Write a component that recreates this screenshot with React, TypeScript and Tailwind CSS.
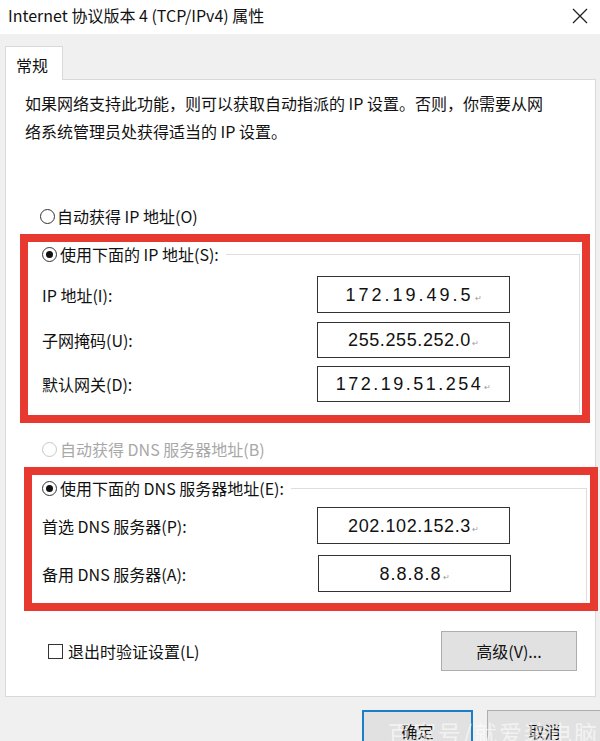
import React from "react";

const FONT = { fontFamily: '"Noto Sans CJK SC", "Noto Sans", sans-serif' } as const;

function Radio({ checked, disabled }: { checked?: boolean; disabled?: boolean }) {
  return (
    <span
      className={
        disabled
          ? "w-[15px] h-[15px] rounded-full border border-[#c8c8c8] bg-white flex items-center justify-center shrink-0"
          : "w-[15px] h-[15px] rounded-full border border-[#333333] bg-white flex items-center justify-center shrink-0"
      }
    >
      {checked && <span className="w-[7px] h-[7px] rounded-full bg-[#111111]" />}
    </span>
  );
}

function IpBox({ value, track, h }: { value: string; track: string; h: string }) {
  return (
    <div
      className={`w-[193px] ${h} border-[1.5px] border-[#333333] bg-white flex items-center justify-center`}
    >
      <span
        className={`text-[18px] leading-none text-[#111111] ${track}`}
        style={{ fontFamily: '"Liberation Sans", Arial, sans-serif' }}
      >
        {value}
      </span>
      <span className="text-[8px] leading-none text-[#9a9a9a] self-end mb-[10px] ml-[1px]">↵</span>
    </div>
  );
}

export default function App() {
  return (
    <div
      className="w-[600px] h-[741px] bg-[#f0f0f0] overflow-hidden relative text-[16px] text-[#111111]"
      style={FONT}
    >
      {/* title bar */}
      <div className="h-[34px] bg-white flex items-center justify-between pl-[8px] pr-[12px] pb-[4px]">
        <span className="leading-none">Internet 协议版本 4 (TCP/IPv4) 属性</span>
        <svg width="16" height="16" viewBox="0 0 16 16" className="mt-[2px]">
          <path d="M1 1 L15 15 M15 1 L1 15" stroke="#222" strokeWidth="1.3" fill="none" />
        </svg>
      </div>

      {/* tab */}
      <div className="mt-[12px] ml-[5px] w-[58px] h-[34px] bg-white border border-b-0 border-[#d9d9d9] relative z-10 -mb-[1px] flex items-start pt-[6px] pl-[10px]">
        常规
      </div>

      {/* panel */}
      <div className="ml-[5px] w-[591px] h-[618px] bg-white border border-[#d9d9d9]">
        <p className="mt-[9px] pl-[19px] leading-[28px]">
          如果网络支持此功能，则可以获取自动指派的 IP 设置。否则，你需要从网
          <br />
          络系统管理员处获得适当的 IP 设置。
        </p>

        <div className="mt-[61px] h-[20px] flex items-center pl-[34px] gap-[2px]">
          <Radio />
          <span>自动获得 IP 地址(O)</span>
        </div>

        {/* red box 1 */}
        <div className="mt-[8px] ml-[14px] w-[570px] h-[189px] border-8 border-[#e7392f]">
          <div className="pr-[2px] pb-[2px] h-full flex flex-col">
            <div className="mt-[2px] h-[20px] flex items-center pl-[14px] gap-[3px]">
              <Radio checked />
              <span>使用下面的 IP 地址(S):</span>
              <div className="flex-1 self-end h-[10px] border-t border-r border-[#dedede] ml-[4px]" />
            </div>
            <div className="flex-1 border-r border-[#dedede] pt-[12px] flex flex-col">
              <div className="flex items-center h-[37px]">
                <span className="w-[289px] pl-[14px]">IP 地址(I):</span>
                <IpBox value="172.19.49.5" track="tracking-[3px]" h="h-[37px]" />
              </div>
              <div className="flex items-center h-[36px] mt-[9px]">
                <span className="w-[289px] pl-[14px]">子网掩码(U):</span>
                <IpBox value="255.255.252.0" track="tracking-[0.6px]" h="h-[36px]" />
              </div>
              <div className="flex items-center h-[36px] mt-[8px]">
                <span className="w-[289px] pl-[14px]">默认网关(D):</span>
                <IpBox value="172.19.51.254" track="tracking-[2.5px]" h="h-[36px]" />
              </div>
            </div>
          </div>
        </div>

        <div className="mt-[16px] h-[20px] flex items-center pl-[36px] gap-[3px] text-[#a8a8a8]">
          <Radio disabled />
          <span>自动获得 DNS 服务器地址(B)</span>
        </div>

        {/* red box 2 */}
        <div className="mt-[8px] ml-[18px] w-[574px] h-[144px] border-8 border-[#e7392f]">
          <div className="pr-[3px] pb-[2px] h-full flex flex-col">
            <div className="mt-[3px] h-[20px] flex items-center pl-[10px] gap-[3px]">
              <Radio checked />
              <span>使用下面的 DNS 服务器地址(E):</span>
              <div className="flex-1 self-end h-[10px] border-t border-r border-[#dedede] ml-[4px]" />
            </div>
            <div className="flex-1 border-r border-[#dedede] pt-[9px] flex flex-col">
              <div className="flex items-center h-[37px]">
                <span className="w-[285px] pl-[10px]">首选 DNS 服务器(P):</span>
                <IpBox value="202.102.152.3" track="tracking-[0.6px]" h="h-[37px]" />
              </div>
              <div className="flex items-center h-[37px] mt-[11px]">
                <span className="w-[286px] pl-[10px]">备用 DNS 服务器(A):</span>
                <IpBox value="8.8.8.8" track="tracking-[1px]" h="h-[37px]" />
              </div>
            </div>
          </div>
        </div>

        {/* checkbox + advanced */}
        <div className="mt-[20px] flex items-center justify-between pl-[42px] pr-[18px]">
          <div className="flex items-center gap-[5px]">
            <span className="w-[15px] h-[15px] border border-[#333333] bg-white" />
            <span>退出时验证设置(L)</span>
          </div>
          <div className="w-[136px] h-[40px] bg-[#e1e1e1] border border-[#adadad] flex items-center justify-center">
            高级(V)...
          </div>
        </div>
      </div>

      {/* bottom buttons */}
      <div className="mt-[13px] flex justify-end gap-[14px] -mr-[2px]">
        <div className="w-[111px] h-[41px] bg-[#e1e1e1] border-2 border-[#1a7fc7] flex items-center justify-center">
          确定
        </div>
        <div className="w-[115px] h-[41px] bg-[#e1e1e1] border border-[#adadad] flex items-center justify-center">
          取消
        </div>
      </div>

      {/* watermark */}
      <div className="absolute left-[388px] top-[721px] text-[23px] text-white/60 tracking-[2px] whitespace-nowrap leading-none">
        百家号/就爱装电脑
      </div>
    </div>
  );
}
